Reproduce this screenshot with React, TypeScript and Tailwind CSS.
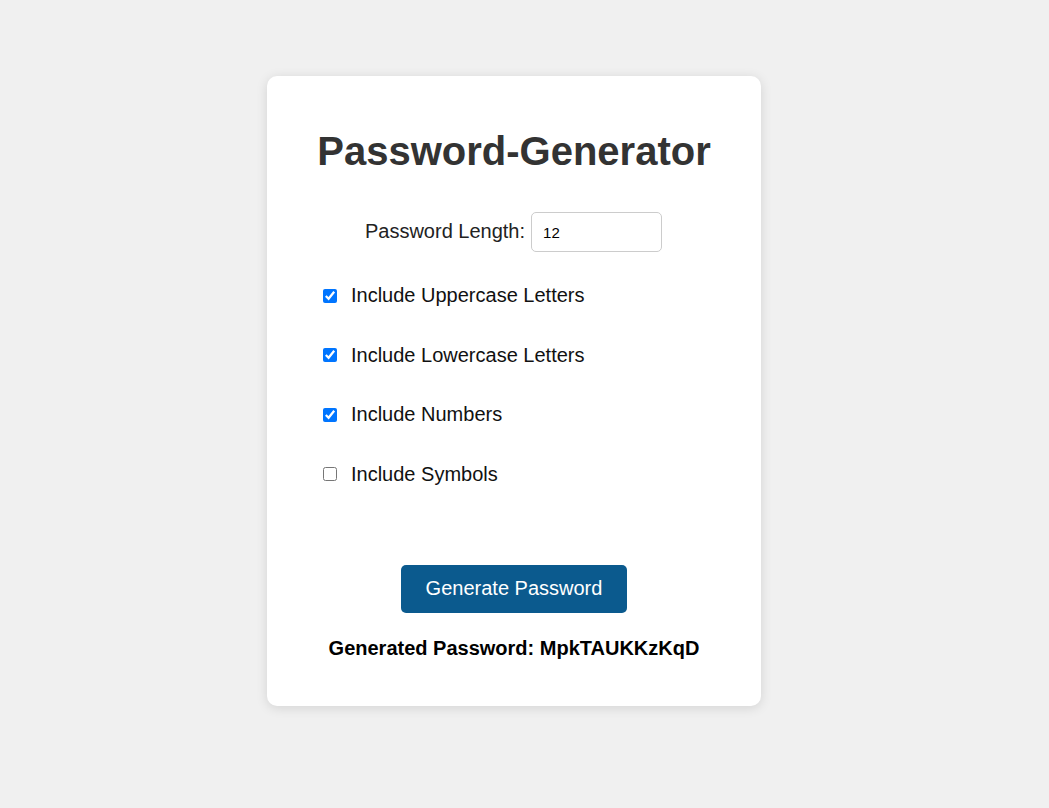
import React, { useState } from "react";

export default function App() {
  const [len, setLen] = useState("12");
  const [upper, setUpper] = useState(true);
  const [lower, setLower] = useState(true);
  const [nums, setNums] = useState(true);
  const [syms, setSyms] = useState(false);
  const [pw] = useState("MpkTAUKKzKqD");

  const rows: [string, boolean, (v: boolean) => void][] = [
    ["Include Uppercase Letters", upper, setUpper],
    ["Include Lowercase Letters", lower, setLower],
    ["Include Numbers", nums, setNums],
    ["Include Symbols", syms, setSyms],
  ];

  return (
    <div
      className="min-h-screen bg-[#f0f0f0] pt-[76px] pl-[267px]"
      style={{ fontFamily: '"Liberation Sans", Arial, sans-serif' }}
    >
      <div className="w-[494px] bg-white rounded-[10px] shadow-[0_2px_12px_rgba(0,0,0,0.12)] pt-[52px] pb-[46px] flex flex-col">
        <h1 className="text-[40px] leading-[46px] font-bold text-[#333] text-center">
          Password-Generator
        </h1>

        <div className="mt-[38px] flex items-baseline justify-center pr-[1px]">
          <label className="text-[20px] leading-[23px] text-[#222]">Password Length:</label>
          <input
            type="number"
            value={len}
            onChange={(e) => setLen(e.target.value)}
            className="ml-[6px] w-[131px] h-[40px] px-[11px] border border-[#ccc] rounded-[5px] text-[15px] text-black outline-none [appearance:textfield]"
          />
        </div>

        <div className="mt-[32px] pl-[56px] flex flex-col gap-[36.5px]">
          {rows.map(([label, val, set]) => (
            <label key={label} className="flex items-center h-[23px] text-[20px] leading-[23px] text-[#111]">
              <input
                type="checkbox"
                checked={val}
                onChange={(e) => set(e.target.checked)}
                className="w-[14px] h-[14px] m-0 mr-[14px] accent-[#0075ff]"
              />
              {label}
            </label>
          ))}
        </div>

        <div className="mt-[79px] flex justify-center">
          <button className="w-[226px] h-[48px] bg-[#0b5a8e] text-white text-[20px] leading-[23px] rounded-[5px]">
            Generate Password
          </button>
        </div>

        <p className="mt-[24px] text-center text-[20px] leading-[23px] font-bold text-black">
          Generated Password: {pw}
        </p>
      </div>
    </div>
  );
}
